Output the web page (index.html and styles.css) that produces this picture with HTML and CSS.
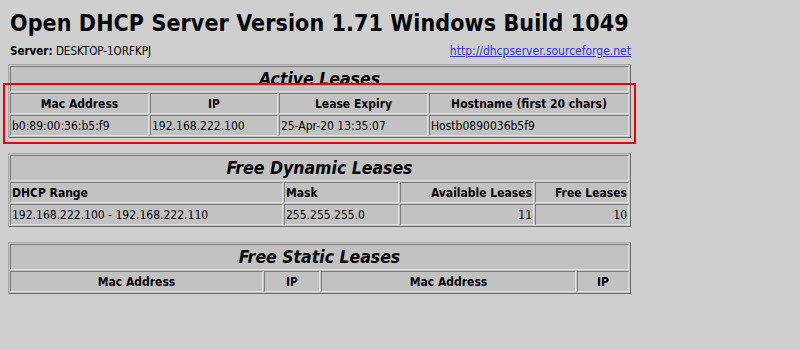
FILE: index.html
```html
<!DOCTYPE html>
<html>
<head>
    <title>Open DHCP Server</title>
    <link rel="stylesheet" href="styles.css">
</head>
<body>
    <h1 class="title">Open DHCP Server Version 1.71 Windows Build 1049</h1>
    <div class="server-bar">
        <span><b>Server:</b> DESKTOP-1ORFKPJ</span>
        <a href="http://dhcpserver.sourceforge.net">http://dhcpserver.sourceforge.net</a>
    </div>

    <div class="highlight-wrap">
        <table class="lease-table">
            <colgroup>
                <col style="width: 139px">
                <col style="width: 128px">
                <col style="width: 149px">
                <col>
            </colgroup>
            <tr><th colspan="4" class="caption">Active Leases</th></tr>
            <tr>
                <th>Mac Address</th>
                <th>IP</th>
                <th>Lease Expiry</th>
                <th>Hostname (first 20 chars)</th>
            </tr>
            <tr>
                <td>b0:89:00:36:b5:f9</td>
                <td>192.168.222.100</td>
                <td>25-Apr-20 13:35:07</td>
                <td>Hostb0890036b5f9</td>
            </tr>
        </table>
        <div class="highlight"></div>
    </div>

    <table class="lease-table">
        <colgroup>
            <col style="width: 273px">
            <col style="width: 115px">
            <col style="width: 134px">
            <col>
        </colgroup>
        <tr><th colspan="4" class="caption">Free Dynamic Leases</th></tr>
        <tr>
            <th class="left">DHCP Range</th>
            <th class="left">Mask</th>
            <th class="right">Available Leases</th>
            <th class="right">Free Leases</th>
        </tr>
        <tr>
            <td>192.168.222.100 - 192.168.222.110</td>
            <td>255.255.255.0</td>
            <td class="right">11</td>
            <td class="right">10</td>
        </tr>
    </table>

    <table class="lease-table static">
        <colgroup>
            <col style="width: 253px">
            <col style="width: 56px">
            <col style="width: 255px">
            <col>
        </colgroup>
        <tr><th colspan="4" class="caption">Free Static Leases</th></tr>
        <tr>
            <th>Mac Address</th>
            <th>IP</th>
            <th>Mac Address</th>
            <th>IP</th>
        </tr>
    </table>
</body>
</html>
```

FILE: styles.css
```css
body {
    margin: 0;
    padding: 0 8px;
    background: #cfcfcf;
    color: #000;
    font-family: "DejaVu Sans Condensed", "DejaVu Sans", sans-serif;
    font-stretch: condensed;
    font-size: 12px;
}
.title {
    margin: 0;
    padding: 8px 0 0 2px;
    font-size: 23px;
    font-weight: bold;
    line-height: 30px;
    letter-spacing: 0.1px;
}
.server-bar {
    display: flex;
    justify-content: space-between;
    width: 621px;
    margin: 6px 0 0 2px;
    font-size: 11.5px;
    line-height: 14px;
}
.server-bar a {
    color: #3333ee;
    font-size: 12px;
}
.highlight-wrap {
    position: relative;
    width: 623px;
    margin-top: 6px;
}
.highlight {
    position: absolute;
    left: -5px;
    top: 19px;
    width: 629px;
    height: 57px;
    border: 2px solid #ee0000;
    pointer-events: none;
}
.lease-table {
    width: 623px;
    border-collapse: separate;
    border-spacing: 1px;
    border: 1px solid;
    border-color: #a8a8a8 #6a6a6a #6a6a6a #a8a8a8;
    background: #c4c4c4;
    margin-bottom: 15px;
    table-layout: fixed;
}
.lease-table th,
.lease-table td {
    border: 1px solid;
    border-color: #7c7c7c #e0e0e0 #e0e0e0 #7c7c7c;
    background: #c2c2c2;
    padding: 0 1px;
    height: 19px;
    white-space: nowrap;
    overflow: hidden;
}
.lease-table th {
    font-weight: bold;
    text-align: center;
}
.lease-table td {
    text-align: left;
}
.lease-table .caption {
    height: 24px;
    font-size: 17.5px;
    font-style: italic;
    line-height: 24px;
}
.lease-table .left {
    text-align: left;
}
.lease-table .right {
    text-align: right;
}
```
